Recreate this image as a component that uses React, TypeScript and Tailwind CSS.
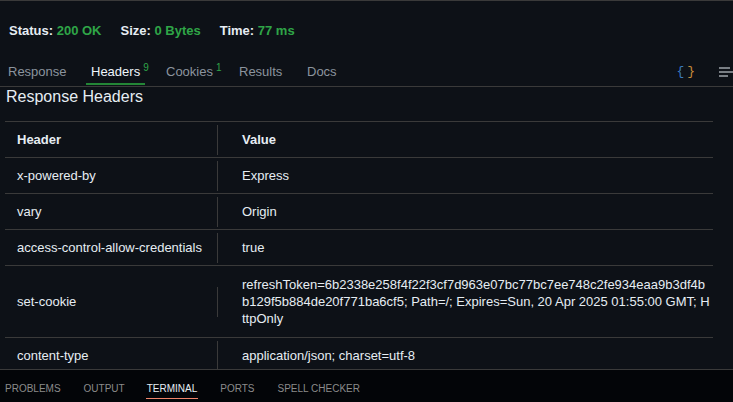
import { ReactNode } from "react";

type Row = { name: string; value: ReactNode; tall?: boolean };

const rows: Row[] = [
  { name: "x-powered-by", value: "Express" },
  { name: "vary", value: "Origin" },
  { name: "access-control-allow-credentials", value: "true" },
  {
    name: "set-cookie",
    tall: true,
    value: (
      <>
        <span className="block">refreshToken=6b2338e258f4f22f3cf7d963e07bc77bc7ee748c2fe934eaa9b3df4b</span>
        <span className="block">b129f5b884de20f771ba6cf5; Path=/; Expires=Sun, 20 Apr 2025 01:55:00 GMT; H</span>
        <span className="block">ttpOnly</span>
      </>
    ),
  },
  { name: "content-type", value: "application/json; charset=utf-8" },
];

// widths follow the spacing of the original tab strip
const tabs = [
  { label: "Response", w: "w-[83px] pl-[5px]" },
  { label: "Headers", count: 9, active: true, w: "w-[75px] pl-[5px]" },
  { label: "Cookies", count: 1, w: "w-[73px] pl-[5px]" },
  { label: "Results", w: "w-[68px] pl-[5px]" },
  { label: "Docs", w: "w-[50px] pl-[5px]" },
];

const panelTabs = ["PROBLEMS", "OUTPUT", "TERMINAL", "PORTS", "SPELL CHECKER"];

function Stat({ label, value }: { label: string; value: string }) {
  return (
    <span className="font-bold">
      <span className="text-[#e6edf3]">{label}: </span>
      <span className="text-[#2fa547]">{value}</span>
    </span>
  );
}

function App() {
  return (
    <div
      className="w-[733px] h-[402px] flex flex-col bg-[#0d1117] text-[#e6edf3] overflow-hidden"
      style={{ fontFamily: '"Liberation Sans", Arial, sans-serif' }}
    >
      <div className="flex-1 min-h-0 overflow-hidden border-t border-[#3a3a3a]">
        {/* status line */}
        <div className="h-[59px] flex items-center gap-[19px] pl-[9px] pt-[1px] text-[13px]">
          <Stat label="Status" value="200 OK" />
          <Stat label="Size" value="0 Bytes" />
          <Stat label="Time" value="77 ms" />
        </div>

        {/* tabs */}
        <div className="h-[27px] flex items-stretch border-b border-[#3a3a3a] text-[13px]">
          <div className="flex items-stretch pl-[3px] pb-[2px]">
            {tabs.map((t) => (
              <div
                key={t.label}
                className={`relative flex items-center ${t.w} ${t.active ? "text-[#f0f6fc]" : "text-[#8b949e]"}`}
              >
                <span>{t.label}</span>
                {t.count !== undefined && (
                  <sup className="ml-[3px] text-[10px] text-[#2fa547] -top-[4px]">{t.count}</sup>
                )}
                {t.active && (
                  <span className="absolute left-0 w-[59px] -bottom-[1px] h-[2px] bg-[#238636]" />
                )}
              </div>
            ))}
          </div>
          <div className="ml-auto flex items-center gap-[24px] pb-[2px]">
            <span className="text-[13px] font-mono">
              <span className="text-[#3b7bbf]">{"{"}</span>
              <span className="text-[#c58a3a] ml-[3px]">{"}"}</span>
            </span>
            <svg width="15" height="10" viewBox="0 0 15 10" className="mr-[-1px]">
              <path d="M0 1h11M0 5h15M0 9h9" stroke="#e6edf3" strokeWidth="1" />
            </svg>
          </div>
        </div>

        <div className="px-[5px]">
          <div className="h-[20px] flex items-center pl-[1px] text-[16px] text-[#e6edf3] font-light">
            Response Headers
          </div>

          <table className="mt-[14px] w-[708px] border-collapse text-[13px] table-fixed">
            <colgroup>
              <col className="w-[213px]" />
              <col />
            </colgroup>
            <thead>
              <tr className="h-[36px] border-t border-b border-[#3a3a3a]">
                <th className="text-left font-bold pl-[12px]">
                  <div className="h-[30px] flex items-center border-r border-[#3a3a3a]">Header</div>
                </th>
                <th className="text-left font-bold pl-[24px]">Value</th>
              </tr>
            </thead>
            <tbody>
              {rows.map((r) => (
                <tr
                  key={r.name}
                  className={r.tall ? "h-[72px] border-b border-[#3a3a3a]" : "h-[36px] border-b border-[#3a3a3a]"}
                >
                  <td className="pl-[12px] whitespace-nowrap">
                    <div className="h-[30px] flex items-center border-r border-[#3a3a3a]">{r.name}</div>
                  </td>
                  <td className="pl-[24px] leading-[17px]">{r.value}</td>
                </tr>
              ))}
            </tbody>
          </table>
        </div>
      </div>

      {/* bottom panel */}
      <div className="h-[33px] shrink-0 bg-[#030508] border-t border-[#3a3a3a] flex items-stretch pl-[5px] text-[10px]">
        {panelTabs.map((p) => (
          <div
            key={p}
            className={
              p === "TERMINAL"
                ? "relative flex items-center pt-[4px] mr-[22px] -ml-[2px] px-[1px] text-[#e6edf3]"
                : "relative flex items-center pt-[4px] mr-[23px] text-[#8b8b8b]"
            }
          >
            {p}
            {p === "TERMINAL" && (
              <span className="absolute left-0 right-0 bottom-[3px] h-[1px] bg-[#f0846a]" />
            )}
          </div>
        ))}
      </div>
    </div>
  );
}

export default App;
